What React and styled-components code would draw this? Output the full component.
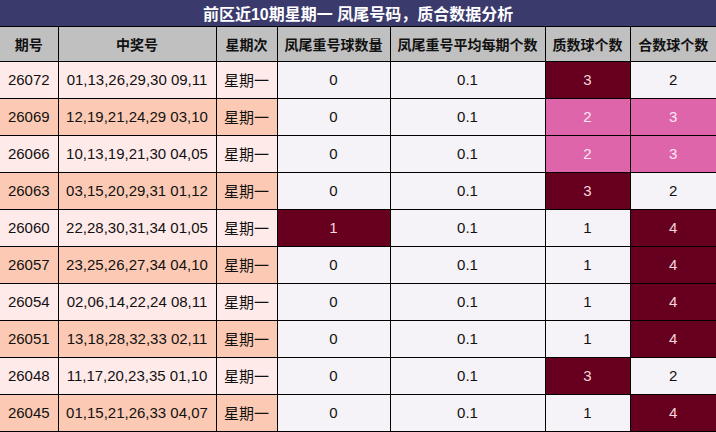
import React from "react";
import styled, { createGlobalStyle } from "styled-components";

const GlobalStyle = createGlobalStyle`
  html, body {
    margin: 0;
    padding: 0;
    background: #fff;
  }
  body {
    font-family: "Liberation Sans", "Noto Sans CJK SC", sans-serif;
  }
`;

const columns = [
  { title: "期号", width: 58 },
  { title: "中奖号", width: 158 },
  { title: "星期次", width: 61 },
  { title: "凤尾重号球数量", width: 113 },
  { title: "凤尾重号平均每期个数", width: 155 },
  { title: "质数球个数", width: 85 },
  { title: "合数球个数", width: 86 },
];

// tone: "" plain, "dark" maroon, "pink"
const rows = [
  { id: "26072", nums: "01,13,26,29,30 09,11", rep: ["0", ""], prime: ["3", "dark"], comp: ["2", ""] },
  { id: "26069", nums: "12,19,21,24,29 03,10", rep: ["0", ""], prime: ["2", "pink"], comp: ["3", "pink"] },
  { id: "26066", nums: "10,13,19,21,30 04,05", rep: ["0", ""], prime: ["2", "pink"], comp: ["3", "pink"] },
  { id: "26063", nums: "03,15,20,29,31 01,12", rep: ["0", ""], prime: ["3", "dark"], comp: ["2", ""] },
  { id: "26060", nums: "22,28,30,31,34 01,05", rep: ["1", "dark"], prime: ["1", ""], comp: ["4", "dark"] },
  { id: "26057", nums: "23,25,26,27,34 04,10", rep: ["0", ""], prime: ["1", ""], comp: ["4", "dark"] },
  { id: "26054", nums: "02,06,14,22,24 08,11", rep: ["0", ""], prime: ["1", ""], comp: ["4", "dark"] },
  { id: "26051", nums: "13,18,28,32,33 02,11", rep: ["0", ""], prime: ["1", ""], comp: ["4", "dark"] },
  { id: "26048", nums: "11,17,20,23,35 01,10", rep: ["0", ""], prime: ["3", "dark"], comp: ["2", ""] },
  { id: "26045", nums: "01,15,21,26,33 04,07", rep: ["0", ""], prime: ["1", ""], comp: ["4", "dark"] },
];

function App() {
  return (
    <>
      <GlobalStyle />
      <Table>
        <colgroup>
          {columns.map((c) => (
            <col key={c.title} style={{ width: c.width }} />
          ))}
        </colgroup>
        <tbody>
          <TitleRow>
            <TitleCell colSpan={7}>前区近10期星期一 凤尾号码，质合数据分析</TitleCell>
          </TitleRow>
          <HeadRow>
            {columns.map((c) => (
              <HeadCell key={c.title}>{c.title}</HeadCell>
            ))}
          </HeadRow>
          {rows.map((r, i) => (
            <Row key={r.id}>
              <InfoCell $alt={i % 2 === 1}>{r.id}</InfoCell>
              <InfoCell $alt={i % 2 === 1}>{r.nums}</InfoCell>
              <InfoCell $alt={i % 2 === 1}>星期一</InfoCell>
              <DataCell $tone={r.rep[1]}>{r.rep[0]}</DataCell>
              <DataCell>0.1</DataCell>
              <DataCell $tone={r.prime[1]}>{r.prime[0]}</DataCell>
              <DataCell $tone={r.comp[1]}>{r.comp[0]}</DataCell>
            </Row>
          ))}
        </tbody>
      </Table>
    </>
  );
}

const Table = styled.table`
  width: 716px;
  table-layout: fixed;
  border-collapse: collapse;
  border-spacing: 0;

  td {
    border: 1px solid #000;
    padding: 0;
    text-align: center;
    white-space: nowrap;
    overflow: hidden;
  }
  td:first-child {
    border-left: none;
  }
  td:last-child {
    border-right: none;
  }
`;

const TitleRow = styled.tr`
  height: 26px;
`;

const TitleCell = styled.td`
  && {
    border-top: none;
  }
  background: #3b3a6c;
  color: #fff;
  font-weight: 700;
  font-size: 16px;
`;

const HeadRow = styled.tr`
  height: 35px;
`;

const HeadCell = styled.td`
  background: #c0c0c0;
  color: #111;
  font-weight: 700;
  font-size: 14px;
`;

const Row = styled.tr`
  height: 37px;
`;

const InfoCell = styled.td`
  background: ${(p) => (p.$alt ? "#fccab4" : "#ffeaea")};
  color: #111;
  font-size: 15px;
`;

const tones = {
  dark: { bg: "#67001f", fg: "#f3d6de" },
  pink: { bg: "#df65ab", fg: "#fde8f2" },
};

const DataCell = styled.td`
  background: ${(p) => (tones[p.$tone] ? tones[p.$tone].bg : "#f5f3f8")};
  color: ${(p) => (tones[p.$tone] ? tones[p.$tone].fg : "#111")};
  font-size: 15px;
`;

export default App;
